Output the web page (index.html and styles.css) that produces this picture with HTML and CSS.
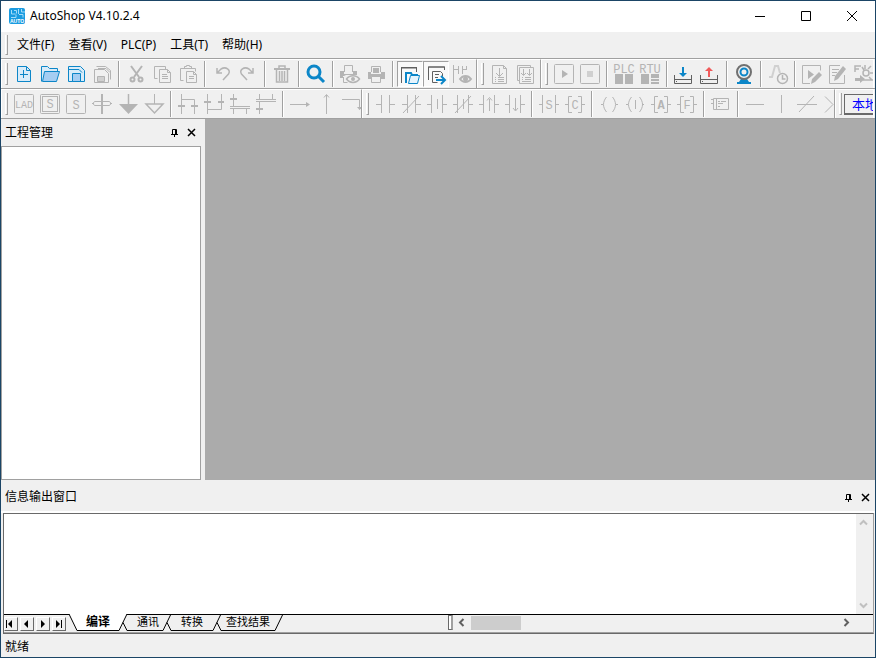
FILE: index.html
```html
<!DOCTYPE html>
<html lang="zh-CN">
<head>
<meta charset="utf-8">
<title>AutoShop V4.10.2.4</title>
<link rel="stylesheet" href="styles.css">
</head>
<body>
<div class="window">
  <header class="titlebar">
    <svg class="logo" viewBox="0 0 16 16"><rect width="16" height="16" rx="2" fill="#1a9be0"/><path d="M2.500 2v4h4M5 2.500h2.500v3M9.500 1v5M12.500 1v3H16M10 6.500h4v3M2 9.500h5v-3" fill="none" stroke="#a5dcf8"/><text x="8" y="15" text-anchor="middle" class="logo-text">AUTO</text></svg>
    <h1 class="title">AutoShop V4.10.2.4</h1>
    <div class="captions">
      <button class="caption" aria-label="最小化"><svg viewBox="0 0 12 12"><path d="M1 6.500h10"/></svg></button>
      <button class="caption" aria-label="最大化"><svg viewBox="0 0 12 12"><path d="M1.500 1.500h9v9h-9z"/></svg></button>
      <button class="caption" aria-label="关闭"><svg viewBox="0 0 12 12"><path d="M1 1l10 10M11 1L1 11"/></svg></button>
    </div>
  </header>

  <nav class="menubar">
    <span class="grip"></span>
    <button class="menu">文件(F)</button><button class="menu">查看(V)</button><button class="menu">PLC(P)</button><button class="menu">工具(T)</button><button class="menu">帮助(H)</button>
  </nav>

  <div class="toolrow">
    <div class="band">
      <span class="grip"></span>
      <button class="tool blue" aria-label="新建"><svg viewBox="0 0 26 26"><path class="pale" d="M6.500 5.500h9l4 4v11h-13z"/><path d="M15.500 5.500v4h4M12.500 9v8M9 13.500h8"/></svg></button>
      <button class="tool blue" aria-label="打开"><svg viewBox="0 0 26 26"><path class="pale" d="M4.500 20.500v-15h6l2 2h8v3"/><path class="mid" d="M7.500 10.500h15l-3 10h-14z"/></svg></button>
      <button class="tool blue" aria-label="保存"><svg viewBox="0 0 26 26"><path class="pale" d="M5.500 5.500h12l4 4v11h-16z"/><path d="M5 8.500h11l3 3"/><path class="mid" d="M9.500 12.500h8v8h-8z"/></svg></button>
      <button class="tool" aria-label="全部保存"><svg viewBox="0 0 26 26"><path d="M7.500 5.500h9l5 4v9M5.500 8.500h10l4 4v9h-14zM9 7.500h8l4 4"/><path class="dim" d="M8.500 15.500h7v5h-7z"/></svg></button>
      <span class="sep"></span>
      <button class="tool" aria-label="剪切"><svg viewBox="0 0 26 26"><path class="thick" d="M8 5l8 11M19 5l-8 11"/><circle class="thick" cx="9.500" cy="18.500" r="2"/><circle class="thick" cx="17.500" cy="18.500" r="2"/></svg></button>
      <button class="tool" aria-label="复制"><svg viewBox="0 0 26 26"><path d="M8.500 17.500h-3v-12h11v3M10.500 8.500h8l3 3v10h-11zM18.500 8.500v3h3M13 13.500h5M13 15.500h6M13 17.500h6"/></svg></button>
      <button class="tool" aria-label="粘贴"><svg viewBox="0 0 26 26"><path d="M8.500 19.500h-3v-12h15v3M9.500 7.500v-2h2v-1h3v1h2v2M11.500 10.500h7l3 3v8h-10zM18.500 10.500v3h3M14 15.500h5M14 17.500h5"/></svg></button>
      <span class="sep"></span>
      <button class="tool" aria-label="撤销"><svg viewBox="0 0 26 26"><path class="bold" d="M8 7v5h5M8 12l4-4c5-3 10 1 7.500 5L14 19"/></svg></button>
      <button class="tool" aria-label="重做"><svg viewBox="0 0 26 26"><path class="bold" d="M18 7v5h-5M18 12l-4-4c-5-3-10 1-7.500 5L12 19"/></svg></button>
      <span class="sep"></span>
      <button class="tool" aria-label="删除"><svg viewBox="0 0 26 26"><path class="bold" d="M10 7V5h6v2"/><path class="thick" d="M5 8h16"/><path class="bold" d="M7.500 9v12h11V9M10.500 10v10M13 10v10M15.500 10v10"/></svg></button>
      <span class="sep"></span>
      <button class="tool blue" aria-label="查找"><svg viewBox="0 0 26 26"><circle class="heavy" cx="11" cy="11" r="6"/><path class="heavy" d="M15 15l6 6"/></svg></button>
      <span class="sep"></span>
      <button class="tool" aria-label="打印预览"><svg viewBox="0 0 26 26"><path d="M7.500 11V4.500h8V11"/><path class="fill" d="M3 10h4v3h9v-3h4v4H9l-2 1H6v2H3z"/><path d="M6.500 16v5.500h4"/><path class="paper bold" d="M9.500 18c3-4.500 10-4.500 13 0-3 4.500-10 4.500-13 0z"/><circle class="fill" cx="16" cy="18" r="2"/></svg></button>
      <button class="tool" aria-label="打印"><svg viewBox="0 0 26 26"><path d="M8.500 11V5.500h9V11"/><path class="fill" d="M10 7h6v5h-6zM5 11h3v2h10v-2h4v7H5z"/><path class="paper" d="M8.500 15.500h9v6h-9z"/></svg></button>
      <span class="sep"></span>
      <button class="tool pressed" aria-label="工程管理" aria-pressed="true"><svg viewBox="0 0 26 26"><path class="ink" d="M4.500 22v-15h15v4M4 6.500h16"/><path class="bluestroke" d="M9 22V12h5l1 2h6"/><path class="bluepaper" d="M13.500 14.500h9l-2 8h-9z"/></svg></button>
      <button class="tool pressed" aria-label="信息输出窗口" aria-pressed="true"><svg viewBox="0 0 26 26"><path class="ink" d="M5.500 19v-13h16v3M5 6h17M9.500 21.500v-11h8l2 2v3M9.500 21.500h5M12 13.500h4M12 16.500h3"/><path class="bluestroke" d="M13 19h9M18 15l4 4-4 4"/></svg></button>
      <button class="tool" aria-label="监控"><svg viewBox="0 0 26 26"><path d="M4.500 4v18M4 8.500h5M9.500 5v8M13.500 5v8M13 8.500h4M17.500 5v4"/><path class="thick" d="M11 18c3-4 8-4 11 0-3 4-8 4-11 0z"/><circle class="fill" cx="16.500" cy="18" r="2.500"/></svg></button>
    </div>
    <div class="band">
      <span class="grip"></span>
      <button class="tool" aria-label="编译"><svg viewBox="0 0 26 26"><path d="M5.500 4.500h11l3 3v15h-14zM16.500 4.500v3h3M12.500 7v8M9 12l3.500 3.500L16 12M8 16.500h1M11 16.500h6M8 18.500h1M11 18.500h6M8 20.500h1M11 20.500h6"/></svg></button>
      <button class="tool" aria-label="全部编译"><svg viewBox="0 0 26 26"><path d="M6.500 19.500h-2v-15h13v2M6.500 6.500h14v16h-14zM10.500 8v6M16.500 8v6M8 12l2.500 2.500L13 12M14 12l2.500 2.500L19 12M9 16.500h1M12 16.500h6M9 18.500h1M12 18.500h6M9 20.500h9"/></svg></button>
    </div>
    <div class="band grow">
      <span class="grip"></span>
      <button class="tool" aria-label="运行"><svg viewBox="0 0 26 26"><rect x="3.500" y="3.500" width="19" height="19" rx="1"/><path class="fill" d="M11 9l6 4-6 4z"/></svg></button>
      <button class="tool" aria-label="停止"><svg viewBox="0 0 26 26"><rect x="3.500" y="3.500" width="19" height="19" rx="1"/><path class="dim flat" d="M10 10h6v6h-6z"/></svg></button>
      <span class="sep"></span>
      <button class="tool" aria-label="PLC"><svg viewBox="0 0 26 26"><text x="13" y="12" text-anchor="middle">PLC</text><path class="fill" d="M4 13h8v10H4zM14 13h8v10h-8z"/></svg></button>
      <button class="tool" aria-label="RTU"><svg viewBox="0 0 26 26"><text x="13" y="12" text-anchor="middle">RTU</text><path class="fill" d="M4 13h8v10H4zM14 13h8v4h-8zM14 18h8v2h-8zM14 21h8v2h-8z"/></svg></button>
      <span class="sep"></span>
      <button class="tool" aria-label="下载"><svg viewBox="0 0 26 26"><path class="ink" d="M3.500 14v8.500h17V14M3 18.500h18M5 20.500h1"/><path class="bluefill" d="M11 6h2v6h3l-4 4-4-4h3z"/></svg></button>
      <button class="tool" aria-label="上传"><svg viewBox="0 0 26 26"><path class="ink" d="M3.500 14v8.500h17V14M3 18.500h18M5 20.500h1"/><path class="redfill" d="M11 16h2v-6h3l-4-4-4 4h3z"/></svg></button>
      <span class="sep"></span>
      <button class="tool" aria-label="在线"><svg viewBox="0 0 26 26"><path class="bluefill" d="M10 18h6l2 3h2v2H6v-2h2z"/><circle cx="13" cy="11" r="7" fill="#f0f0f0" stroke="#707070" stroke-width="2"/><circle class="bluestroke" cx="13" cy="11" r="3.500"/></svg></button>
      <span class="sep"></span>
      <button class="tool" aria-label="示波器"><svg viewBox="0 0 26 26"><path class="faint" d="M4 16h3l3-11h3l2 7"/><circle class="bold" cx="17.500" cy="17.500" r="5"/><path class="bold" d="M17.500 14v4h3"/></svg></button>
      <span class="sep"></span>
      <button class="tool" aria-label="运行编辑"><svg viewBox="0 0 26 26"><path d="M11 22.500H3.500v-18h18v5"/><path class="fill" d="M9 9l6 4.500L9 18zM20 11l3 3-7 7-4 2 1-5z"/></svg></button>
      <button class="tool" aria-label="编辑"><svg viewBox="0 0 26 26"><path d="M15 4.500H4.500v18h15V14M7 8.500h7M7 11.500h5M7 14.500h3"/><path class="fill" d="M18 5l3 3-8 10-4 2 1-5z"/></svg></button>
      <button class="tool" aria-label="设置"><svg viewBox="0 0 26 26"><path class="bold" d="M4 11V5h6M4 8h4M14 4v4M20 5l-3 3M11 6l2 3M19 12h4M18 16l3 3M12 19h10"/><circle class="bold" cx="15" cy="12" r="3"/><path class="fill" d="M4 17h5v-3l5 4-5 4v-2H4z"/></svg></button>
    </div>
  </div>

  <div class="toolrow">
    <div class="band first">
      <span class="grip"></span>
      <button class="tool" aria-label="梯形图"><svg viewBox="0 0 26 26"><rect x="3.500" y="3.500" width="19" height="19" rx="1"/><text class="small" x="13" y="17" text-anchor="middle">LAD</text></svg></button>
      <button class="tool" aria-label="步进"><svg viewBox="0 0 26 26"><rect x="3.500" y="3.500" width="19" height="19" rx="1"/><rect x="5.500" y="5.500" width="15" height="15"/><text x="13" y="17" text-anchor="middle">S</text></svg></button>
      <button class="tool" aria-label="状态"><svg viewBox="0 0 26 26"><rect x="3.500" y="3.500" width="19" height="19" rx="1"/><text x="13" y="18" text-anchor="middle">S</text></svg></button>
      <button class="tool" aria-label="转移"><svg viewBox="0 0 26 26"><path d="M3 12.500h2M21 12.500h2M5.500 10.500h15l1.500 2-1.500 2h-15L4 12.500z"/><path class="thick" d="M13 3v20"/></svg></button>
      <button class="tool" aria-label="跳转"><svg viewBox="0 0 26 26"><path class="bold" d="M13.500 3v10"/><path class="fill" d="M4 13h19l-9.500 10z"/></svg></button>
      <button class="tool" aria-label="复位"><svg viewBox="0 0 26 26"><path d="M13.500 3v10"/><path class="bold" d="M5 13h17l-8.500 9z"/></svg></button>
      <span class="sep"></span>
      <button class="tool" aria-label="选择分支"><svg viewBox="0 0 26 26"><path d="M6.500 3v20M6.500 8.500h13V23"/><path class="thick" d="M3 15h7M16 15h7"/></svg></button>
      <button class="tool" aria-label="选择汇合"><svg viewBox="0 0 26 26"><path d="M6.500 3v20M6.500 18.500h14V3"/><path class="thick" d="M3 11h7M17 11h6"/></svg></button>
      <button class="tool" aria-label="并行分支"><svg viewBox="0 0 26 26"><path d="M6.500 3v12M3 15.500h20M3 17.500h20M6.500 18v5M19.500 18v5"/><path class="thick" d="M3 8h7"/></svg></button>
      <button class="tool" aria-label="并行汇合"><svg viewBox="0 0 26 26"><path d="M6.500 3v5M19.500 3v5M3 8.500h20M3 10.500h20M6.500 11v12"/><path class="thick" d="M3 18h7"/></svg></button>
      <span class="sep"></span>
      <button class="tool" aria-label="右"><svg viewBox="0 0 26 26"><path d="M3 13.500h18"/><path class="fill" d="M19 11l4 2.500-4 2.500z"/></svg></button>
      <button class="tool" aria-label="上"><svg viewBox="0 0 26 26"><path d="M13.500 4v19M11 6.500l2.500-3 2.500 3"/></svg></button>
      <button class="tool" aria-label="折线"><svg viewBox="0 0 26 26"><path d="M3 8.500h17.500v10"/><path class="fill" d="M18 16h5l-2.500 3z"/></svg></button>
    </div>
    <div class="band second">
      <span class="grip"></span>
      <button class="tool" aria-label="常开触点"><svg viewBox="0 0 26 26"><path d="M4 13.500h5.500M9.500 4v18M17.500 4v18M17.500 13.500H23"/></svg></button>
      <button class="tool" aria-label="常闭触点"><svg viewBox="0 0 26 26"><path d="M4 13.500h5.500M9.500 4v18M17.500 4v18M17.500 13.500H23M5 22L21 5"/></svg></button>
      <button class="tool" aria-label="立即常开"><svg viewBox="0 0 26 26"><path d="M3 13.500h4.500M7.500 4v18M18.500 4v18M18.500 13.500H23M13.500 8v10"/></svg></button>
      <button class="tool" aria-label="立即常闭"><svg viewBox="0 0 26 26"><path d="M3 13.500h4.500M7.500 4v18M18.500 4v18M18.500 13.500H23M13.500 8v10M5 22L21 5"/></svg></button>
      <button class="tool" aria-label="上升沿"><svg viewBox="0 0 26 26"><path d="M3 13.500h4.500M7.500 4v18M18.500 4v18M18.500 13.500H23M13.500 8v12M11 9.500l2.500-3 2.500 3"/></svg></button>
      <button class="tool" aria-label="下降沿"><svg viewBox="0 0 26 26"><path d="M3 13.500h4.500M7.500 4v18M18.500 4v18M18.500 13.500H23M13.500 7v12M11 17l2.500 3 2.500-3"/></svg></button>
      <span class="sep"></span>
      <button class="tool" aria-label="状态触点"><svg viewBox="0 0 26 26"><path d="M3 13.500h3.500M6.500 4v18M19.500 4v18M19.500 13.500H23"/><text x="13" y="18" text-anchor="middle">S</text></svg></button>
      <button class="tool" aria-label="比较触点"><svg viewBox="0 0 26 26"><path d="M3 13.500h3.500M10 5.500H6.500v16H10M16 5.500h3.500v16H16M19.500 13.500H23"/><text x="13" y="18" text-anchor="middle">C</text></svg></button>
      <span class="sep"></span>
      <button class="tool" aria-label="线圈"><svg viewBox="0 0 26 26"><path d="M5 13.500h2M10.500 6c-4 5-4 10 0 15M16.500 6c4 5 4 10 0 15M20 13.500h2"/></svg></button>
      <button class="tool" aria-label="立即线圈"><svg viewBox="0 0 26 26"><path d="M4 13.500h2M9.500 6c-4 5-4 10 0 15M17.500 6c4 5 4 10 0 15M20 13.500h2M13.500 9v9"/></svg></button>
      <button class="tool" aria-label="应用指令"><svg viewBox="0 0 26 26"><path d="M3 13.500h3.500M10 5.500H6.500v16H10M16 5.500h3.500v16H16M19.500 13.500H23"/><text class="strong" x="13" y="18" text-anchor="middle">A</text></svg></button>
      <button class="tool" aria-label="功能块"><svg viewBox="0 0 26 26"><path d="M3 13.500h3.500M10 5.500H6.500v16H10M16 5.500h3.500v16H16M19.500 13.500H23"/><text x="13" y="18" text-anchor="middle">F</text></svg></button>
      <span class="sep"></span>
      <button class="tool" aria-label="指令框"><svg viewBox="0 0 26 26"><path d="M5.500 7.500h15v11h-15zM8.500 7v12M3 8.500h3M3 12.500h3M10 10.500h2M13 10.500h5M10 12.500h5M10 15.500h2"/></svg></button>
      <span class="sep"></span>
      <button class="tool" aria-label="横线"><svg viewBox="0 0 26 26"><path d="M4 13.500h18"/></svg></button>
      <button class="tool" aria-label="竖线"><svg viewBox="0 0 26 26"><path d="M13.500 4v18"/></svg></button>
      <button class="tool" aria-label="取反"><svg viewBox="0 0 26 26"><path d="M3 13.500h20M5 21L20 5"/></svg></button>
      <button class="tool" aria-label="更多"><svg viewBox="0 0 26 26"><path d="M5 5.500l8 8-8 8"/></svg></button>
    </div>
    <div class="band grow">
      <span class="grip"></span>
      <button class="local">本地</button>
    </div>
  </div>

  <main class="workspace">
    <aside class="project">
      <div class="panel-head">
        <h2 class="panel-title">工程管理</h2>
        <button class="mini" aria-label="固定"><svg viewBox="0 0 9 9"><path d="M2.500 6V1.500h4V6M1 6.500h7M4.500 6v3M5.500 1v5"/></svg></button>
        <button class="mini" aria-label="关闭"><svg viewBox="0 0 9 9"><path class="cross" d="M1 1l7 7M8 1L1 8"/></svg></button>
      </div>
      <div class="tree"></div>
    </aside>
    <section class="canvas"></section>
  </main>

  <section class="output">
    <div class="panel-head">
      <h2 class="panel-title">信息输出窗口</h2>
      <button class="mini" aria-label="固定"><svg viewBox="0 0 9 9"><path d="M2.500 6V1.500h4V6M1 6.500h7M4.500 6v3M5.500 1v5"/></svg></button>
      <button class="mini" aria-label="关闭"><svg viewBox="0 0 9 9"><path class="cross" d="M1 1l7 7M8 1L1 8"/></svg></button>
    </div>
    <div class="frame">
      <div class="log">
        <div class="log-text"></div>
        <div class="vscroll">
          <svg class="chev" viewBox="0 0 9 9"><path d="M1 6.500L4.500 3 8 6.500"/></svg>
          <svg class="chev" viewBox="0 0 9 9"><path d="M1 2.500L4.500 6 8 2.500"/></svg>
        </div>
      </div>
      <div class="tabbar">
        <div class="steps">
          <button class="step" aria-label="第一个"><svg viewBox="0 0 12 12"><path d="M2 2h1v8H2zM8 2v8L4 6z"/></svg></button>
          <button class="step" aria-label="上一个"><svg viewBox="0 0 12 12"><path d="M8 2v8L4 6z"/></svg></button>
          <button class="step" aria-label="下一个"><svg viewBox="0 0 12 12"><path d="M5 2v8l4-4z"/></svg></button>
          <button class="step" aria-label="最后一个"><svg viewBox="0 0 12 12"><path d="M4 2v8l4-4zM9 2h1v8H9z"/></svg></button>
        </div>
        <div class="tabs">
          <button class="tab active"><svg class="edge" viewBox="0 0 8 17"><path class="face" d="M0 0l8 16.500V0z"/><path d="M0 0l8 16.500"/></svg><span class="label">编译</span><svg class="edge" viewBox="0 0 8 17"><path class="face" d="M8 0L0 16.500V0z"/><path d="M8 0L0 16.500"/></svg></button>
          <button class="tab tight"><svg class="edge" viewBox="0 0 8 17"><path d="M4 8.500l4 8"/></svg><span class="label">通讯</span><svg class="edge" viewBox="0 0 8 17"><path d="M8 0L0 16.500"/></svg></button>
          <button class="tab"><svg class="edge" viewBox="0 0 8 17"><path d="M4 8.500l4 8"/></svg><span class="label">转换</span><svg class="edge" viewBox="0 0 8 17"><path d="M8 0L0 16.500"/></svg></button>
          <button class="tab snug"><svg class="edge" viewBox="0 0 8 17"><path d="M4 8.500l4 8"/></svg><span class="label">查找结果</span><svg class="edge" viewBox="0 0 8 17"><path d="M8 0L0 16.500"/></svg></button>
        </div>
        <div class="hscroll">
          <span class="splitter"></span>
          <svg class="chev dark" viewBox="0 0 9 9"><path d="M6.500 1L3 4.500 6.500 8"/></svg>
          <span class="thumb"></span>
          <svg class="chev dark end" viewBox="0 0 9 9"><path d="M2.500 1L6 4.500 2.500 8"/></svg>
        </div>
      </div>
    </div>
  </section>

  <footer class="status">就绪</footer>
</div>
</body>
</html>
```
FILE: styles.css
```css
* { box-sizing: border-box; }

body {
  margin: 0;
  font: 12px/16px "Noto Sans", "Noto Sans CJK SC", sans-serif;
  color: #000;
}

button {
  margin: 0;
  padding: 0;
  border: 0;
  background: none;
  font: inherit;
  color: inherit;
}

svg { display: block; fill: none; }

.window {
  display: flex;
  flex-direction: column;
  min-height: 100vh;
  border: 1px solid #1b4566;
  background: #f0f0f0;
  overflow: hidden;
}

/* Title bar */
.titlebar {
  display: flex;
  align-items: center;
  height: 31px;
  padding: 0 0 2px 8px;
  background: #fff;
}
.logo { width: 16px; height: 16px; }
.logo-text { font: bold 5px "Liberation Sans", sans-serif; fill: #fff; }
.title { flex: 1; margin: 0 0 0 5px; font-size: 12px; font-weight: 400; }
.captions { display: flex; }
.caption {
  display: flex;
  align-items: center;
  justify-content: center;
  width: 46px;
  height: 28px;
}
.caption svg { width: 12px; height: 12px; stroke: #000; }

/* Menu and tool bars */
.menubar {
  display: flex;
  align-items: center;
  height: 27px;
  border-bottom: 1px solid #a0a0a0;
}
.menu { margin-right: 14px; white-space: nowrap; }
.menubar .grip { margin-right: 9px; }

.grip {
  flex: none;
  align-self: stretch;
  width: 3px;
  margin: 3px 3px 3px 4px;
  border: 1px solid #a0a0a0;
  border-width: 0 1px 1px 0;
  border-left: 1px solid #fff;
}
.toolrow {
  display: flex;
  height: 30px;
  padding-right: 1px;
  border-bottom: 1px solid #a0a0a0;
  overflow: hidden;
}
.band {
  display: flex;
  flex: none;
  align-items: center;
  padding-right: 1px;
  border-top: 1px solid #fff;
  border-right: 1px solid #a0a0a0;
  box-shadow: inset 1px 0 #fff;
  overflow: hidden;
}
.band.grow { flex: 1 1 0; min-width: 0; border-right-color: #fff; }
.band.first { width: 361px; }
.band.second { width: 473px; }

.tool { flex: none; width: 26px; height: 26px; color: #b4b4b4; }
.tool svg { width: 26px; height: 26px; stroke: currentColor; }
.tool.pressed {
  background: #f9f9f9;
  border: 1px solid #fff;
  border-top-color: #a0a0a0;
  border-left-color: #a0a0a0;
}
.tool.pressed svg { margin: -1px; }
.tool.blue { color: #0c86c8; }
.tool text {
  font: 12px "Liberation Mono", monospace;
  fill: currentColor;
  stroke: none;
}
.tool .small { font-size: 10px; }
.tool .strong { font-weight: bold; }
.pale { fill: #d9ecf9; }
.mid { fill: #a5cdf2; }
.dim { fill: #d0d0d0; }
.flat { stroke: none; }
.fill { fill: currentColor; stroke: none; }
.paper { fill: #f0f0f0; }
.bold { stroke-width: 1.5; }
.thick { stroke-width: 2; }
.heavy { stroke-width: 3; }
.faint { stroke: #d0d0d0; stroke-width: 2; }
.ink { stroke: #606060; }
.bluefill { fill: #0c86c8; stroke: none; }
.bluepaper { fill: #e6f4fd; stroke: #0c86c8; }
.bluestroke { stroke: #0c86c8; stroke-width: 2; }
.redfill { fill: #f05a5a; stroke: none; }

.sep {
  flex: none;
  align-self: stretch;
  width: 2px;
  margin: 1px 3px;
  border-left: 1px solid #a0a0a0;
  border-right: 1px solid #fff;
}
.local {
  flex: none;
  height: 21px;
  padding: 0 7px;
  margin-left: -1px;
  border: 1px solid #696969;
  border-bottom-width: 2px;
  font-size: 13px;
  color: #00f;
}

/* Workspace */
.workspace { display: flex; flex: 1; }
.project {
  display: flex;
  flex-direction: column;
  width: 204px;
  padding-right: 4px;
}
.panel-head {
  display: flex;
  align-items: center;
  height: 27px;
  padding: 0 5px 0 4px;
}
.panel-title { flex: 1; margin: 0; font-size: 12px; font-weight: 400; }
.mini { width: 9px; height: 9px; margin-left: 8px; }
.mini svg { width: 9px; height: 9px; stroke: #000; }
.mini .cross { stroke-width: 1.5; }
.tree { flex: 1; border: 1px solid #a0a0a0; background: #fff; }
.canvas { flex: 1; background: #ababab; }

/* Output panel */
.output .panel-head { height: 33px; padding-top: 3px; border-bottom: 2px solid #fff; }
.frame {
  margin: 0 1px 0 2px;
  border: 1px solid #696969;
  border-right-color: #a0a0a0;
}
.log { display: flex; height: 100px; background: #fff; }
.log-text { flex: 1; }
.vscroll {
  display: flex;
  flex-direction: column;
  justify-content: space-between;
  width: 17px;
  padding: 4px 3px;
  background: #f0f0f0;
}
.chev { flex: none; width: 9px; height: 9px; stroke: #c0c0c0; stroke-width: 2; }
.chev.dark { stroke: #606060; }

.tabbar {
  display: flex;
  height: 19px;
  border-top: 1px solid #000;
  border-bottom: 1px solid #a0a0a0;
}
.steps { display: flex; gap: 2px; padding-top: 2px; }
.step {
  width: 14px;
  height: 14px;
  border: 1px solid #fff;
  border-right-color: #696969;
  border-bottom-color: #696969;
}
.step svg { width: 12px; height: 12px; margin-left: -1px; fill: #000; }
.tabs { display: flex; margin: -1px 0 0 3px; }
.tab { display: flex; height: 17px; font-size: 11px; line-height: 15px; }
.tab + .tab { margin-left: -8px; }
.edge { flex: none; width: 8px; height: 17px; stroke: #000; }
.edge .face { fill: #fff; stroke: none; }
.label { height: 17px; padding: 0 10px; border-bottom: 1px solid #000; white-space: nowrap; }
.active { font-size: 12px; font-weight: bold; }
.active .label { padding: 0 9px; background: #fff; }
.tight .label { padding-right: 4px; }
.snug .label { padding: 0 5px; }

.hscroll {
  display: flex;
  flex: 1;
  align-items: center;
  padding: 0 22px 2px 19%;
}
.splitter {
  width: 5px;
  height: 15px;
  border: 1px solid #696969;
  border-right: 2px solid #a0a0a0;
  background: #fff;
}
.splitter + .chev { margin: 0 5px 0 4px; }
.thumb { width: 50px; height: 14px; background: #cdcdcd; }
.end { margin-left: auto; }

/* Status bar */
.status { height: 23px; padding: 5px 4px 0; }
```
